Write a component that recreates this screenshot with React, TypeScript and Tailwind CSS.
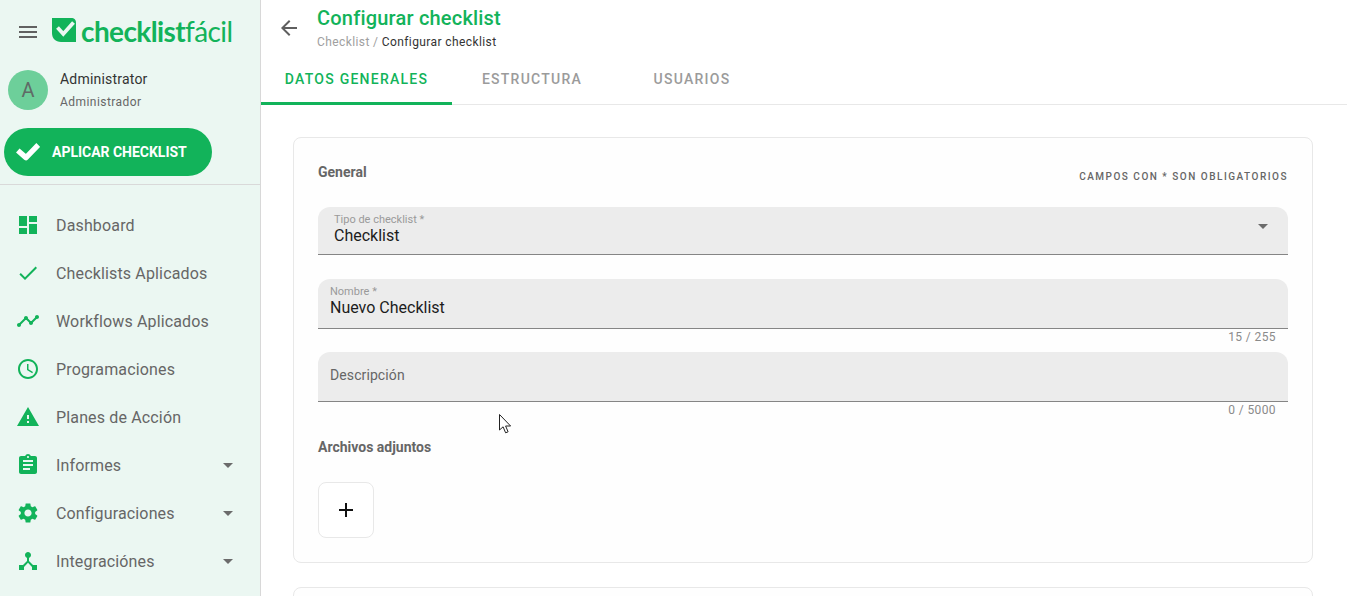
import React from "react";

const G = "#12b35a";
const paths: Record<string, string> = {
  dashboard: "M3 13h8V3H3v10zm0 8h8v-6H3v6zm10 0h8V11h-8v10zm0-18v6h8V3h-8z",
  check: "M9 16.17L4.83 12l-1.42 1.41L9 19 21 7l-1.41-1.41z",
  timeline: "M23 8c0 1.1-.9 2-2 2-.18 0-.35-.02-.51-.07l-3.56 3.55c.05.16.07.34.07.52 0 1.1-.9 2-2 2s-2-.9-2-2c0-.18.02-.36.07-.52l-2.55-2.55c-.16.05-.34.07-.52.07s-.36-.02-.52-.07l-4.55 4.56c.05.16.07.33.07.51 0 1.1-.9 2-2 2s-2-.9-2-2 .9-2 2-2c.18 0 .35.02.51.07l4.56-4.55C8.02 9.36 8 9.18 8 9c0-1.1.9-2 2-2s2 .9 2 2c0 .18-.02.36-.07.52l2.55 2.55c.16-.05.34-.07.52-.07s.36.02.52.07l3.55-3.56C19.02 8.35 19 8.18 19 8c0-1.1.9-2 2-2s2 .9 2 2z",
  schedule: "M11.99 2C6.47 2 2 6.48 2 12s4.47 10 9.99 10C17.52 22 22 17.52 22 12S17.52 2 11.99 2zM12 20c-4.42 0-8-3.58-8-8s3.58-8 8-8 8 3.58 8 8-3.58 8-8 8zm.5-13H11v6l5.25 3.15.75-1.23-4.5-2.67z",
  warning: "M1 21h22L12 2 1 21zm12-3h-2v-2h2v2zm0-4h-2v-4h2v4z",
  assignment: "M19 3h-4.18C14.4 1.84 13.3 1 12 1c-1.3 0-2.4.84-2.82 2H5c-1.1 0-2 .9-2 2v14c0 1.1.9 2 2 2h14c1.1 0 2-.9 2-2V5c0-1.1-.9-2-2-2zm-7 0c.55 0 1 .45 1 1s-.45 1-1 1-1-.45-1-1 .45-1 1-1zm2 14H7v-2h7v2zm3-4H7v-2h10v2zm0-4H7V7h10v2z",
  settings: "M19.14,12.94c0.04-0.3,0.06-0.61,0.06-0.94c0-0.32-0.02-0.64-0.07-0.94l2.03-1.58c0.18-0.14,0.23-0.41,0.12-0.61 l-1.92-3.32c-0.12-0.22-0.37-0.29-0.59-0.22l-2.39,0.96c-0.5-0.38-1.03-0.7-1.62-0.94L14.4,2.81c-0.04-0.24-0.24-0.41-0.48-0.41 h-3.84c-0.24,0-0.43,0.17-0.47,0.41L9.25,5.35C8.66,5.59,8.12,5.92,7.63,6.29L5.24,5.33c-0.22-0.08-0.47,0-0.59,0.22L2.74,8.87 C2.62,9.08,2.66,9.34,2.86,9.48l2.03,1.58C4.84,11.36,4.8,11.69,4.8,12s0.02,0.64,0.07,0.94l-2.03,1.58 c-0.18,0.14-0.23,0.41-0.12,0.61l1.92,3.32c0.12,0.22,0.37,0.29,0.59,0.22l2.39-0.96c0.5,0.38,1.03,0.7,1.62,0.94l0.36,2.54 c0.05,0.24,0.24,0.41,0.48,0.41h3.84c0.24,0,0.44-0.17,0.47-0.41l0.36-2.54c0.59-0.24,1.13-0.56,1.62-0.94l2.39,0.96 c0.22,0.08,0.47,0,0.59-0.22l1.92-3.32c0.12-0.22,0.07-0.47-0.12-0.61L19.14,12.94z M12,15.6c-1.98,0-3.6-1.62-3.6-3.6 s1.62-3.6,3.6-3.6s3.6,1.62,3.6,3.6S13.98,15.6,12,15.6z",
  hub: "M17 16l-4-4V8.82C14.16 8.4 15 7.3 15 6c0-1.66-1.34-3-3-3S9 4.34 9 6c0 1.3.84 2.4 2 2.82V12l-4 4H3v5h5v-3.05l4-4.2 4 4.2V21h5v-5h-4z",
};

function Icon({ d, size = 24, className = "" }: { d: string; size?: number; className?: string }) {
  return (
    <svg width={size} height={size} viewBox="0 0 24 24" fill="currentColor" className={className}>
      <path d={d} />
    </svg>
  );
}

const Caret = () => (
  <svg width="24" height="24" viewBox="0 0 24 24" fill="#6b6b6b"><path d="M7 10l5 5 5-5z" /></svg>
);

const items = [
  { t: "Dashboard", i: "dashboard" },
  { t: "Checklists Aplicados", i: "check" },
  { t: "Workflows Aplicados", i: "timeline" },
  { t: "Programaciones", i: "schedule" },
  { t: "Planes de Acción", i: "warning" },
  { t: "Informes", i: "assignment", c: true },
  { t: "Configuraciones", i: "settings", c: true },
  { t: "Integraciónes", i: "hub", c: true },
];

function Sidebar() {
  return (
    <aside className="w-[261px] h-[596px] shrink-0 bg-[#ebf7f2] border-r border-[#d8d8d8] overflow-hidden">
      <div className="h-[62px] pl-[16px] pt-[20px] flex items-start">
        <svg width="24" height="24" viewBox="0 0 24 24" fill="#616161"><path d="M3 18h18v-2H3v2zm0-5h18v-2H3v2zm0-7v2h18V6H3z" /></svg>
        <div className="flex items-start ml-[12px] -mt-[6px]">
          <svg width="26" height="26" viewBox="0 0 26 26" className="mt-[4px]">
            <path d="M0 0H19C22.5 0 24 1.5 24 5V24H9C3.5 24 0 20.5 0 15Z" fill={G} />
            <path d="M5.5 9.5l5.8 6.5L21.5 4.5" stroke="#ebf7f2" strokeWidth="3.8" fill="none" />
          </svg>
          <span className="ml-[3px] text-[28px] leading-[34px] tracking-[-0.6px] text-[#12b35a] font-['Lato',sans-serif]">
            <span className="font-bold">checklist</span><span className="font-normal">fácil</span>
          </span>
        </div>
      </div>
      <div className="flex items-start pl-[8px] h-[56px] pt-[8px]">
        <div className="w-[40px] h-[40px] rounded-full bg-[#6dcf9a] flex items-center justify-center text-[20px] text-[#5f6b66]">A</div>
        <div className="ml-[12px] -mt-[1px]">
          <div className="text-[14px] leading-[20px] text-[#333] tracking-[0.2px]">Administrator</div>
          <div className="text-[12px] leading-[16px] text-[#666] mt-[5px] tracking-[0.45px]">Administrador</div>
        </div>
      </div>
      <div className="pl-[4px] mt-[10px]">
        <button className="w-[208px] h-[48px] rounded-full bg-[#12b35a] text-white flex items-center pl-[12px]">
          <svg width="24" height="18" viewBox="0 0 24 18" fill="none" stroke="#fff" strokeWidth="5.4" strokeLinejoin="round"><path d="M1.8 7.5L10 14.6 22.3 2" /></svg>
          <span className="ml-[12px] text-[14px] font-bold tracking-[-0.02px]">APLICAR CHECKLIST</span>
        </button>
      </div>
      <div className="border-t border-[#d9d9d9] mt-[8px]" />
      <nav className="pt-[16px]">
        {items.map((it) => (
          <div key={it.t} className="h-[48px] flex items-center pl-[16px] pr-[20px]">
            <Icon d={paths[it.i]} className="text-[#12b35a]" />
            <span className="ml-[16px] pt-[2px] flex-1 text-[16px] text-[#666] tracking-[0.15px]">{it.t}</span>
            {it.c && <Caret />}
          </div>
        ))}
      </nav>
    </aside>
  );
}

function Field({ label, value, h, counter, big, select, px }: { label: string; value?: string; h: number; counter?: string; big?: boolean; select?: boolean; px: string }) {
  return (
    <div>
      <div
        className={`relative bg-[#ececec] rounded-t-[12px] border-b border-[#858585] ${px} ${h === 48 ? "h-[48px]" : "h-[50px]"}`}
      >
        {big ? (
          <div className="text-[14px] leading-[20px] pt-[13px] text-[#666] tracking-[0.1px]">{label}</div>
        ) : (
          <>
            <div className="text-[11px] leading-[12px] pt-[7px] text-[#9a9a9a]">{label}</div>
            <div className="text-[16px] leading-[20px] text-[#1c1c1c]">{value}</div>
          </>
        )}
        {select && <div className="absolute right-[13px] top-[7px]"><Caret /></div>}
      </div>
      {counter && <div className="text-right text-[12px] leading-[16px] pr-[12px] h-[23px] text-[#8a8a8a] tracking-[0.4px]">{counter}</div>}
    </div>
  );
}

function Main() {
  return (
    <main className="relative flex-1 h-[596px] overflow-hidden bg-white">
      <div className="h-[57px] flex items-start pl-[16px]">
        <svg width="24" height="24" viewBox="0 0 24 24" fill="#5f5f5f" className="mt-[16px]"><path d="M20 11H7.83l5.59-5.59L12 4l-8 8 8 8 1.41-1.41L7.83 13H20v-2z" /></svg>
        <div className="ml-[16px] pt-[6px]">
          <div className="text-[20px] leading-[24px] font-medium text-[#12b35a] tracking-[0.2px]">Configurar checklist</div>
          <div className="text-[12px] leading-[16px] mt-[4px] tracking-[0.4px]">
            <span className="text-[#a0a0a0]">Checklist / </span><span className="text-[#333]">Configurar checklist</span>
          </div>
        </div>
      </div>
      <div className="h-[48px] flex border-b border-[#e8e8e8]">
        <div className="w-[191px] h-[48px] border-b-[3px] border-[#12b35a] flex items-center justify-center text-[14px] font-medium tracking-[1.25px] text-[#12b35a]">DATOS GENERALES</div>
        <div className="w-[160px] pb-[2px] flex items-center justify-center text-[14px] font-medium tracking-[1.25px] text-[#9b9b9b]">ESTRUCTURA</div>
        <div className="w-[160px] pb-[2px] flex items-center justify-center text-[14px] font-medium tracking-[1.25px] text-[#9b9b9b]">USUARIOS</div>
      </div>
      <div className="px-[32px] pt-[32px] w-[1084px]">
        <section className="h-[426px] rounded-[8px] border border-[#e8e8e8] bg-[#fefefe] px-[24px] pt-[24px]">
          <div className="flex justify-between items-start h-[45px]">
            <div className="text-[14px] leading-[20px] font-bold text-[#666]">General</div>
            <div className="text-[10px] leading-[12px] font-medium tracking-[1.5px] text-[#666] mt-[9px]">CAMPOS CON * SON OBLIGATORIOS</div>
          </div>
          <Field label="Tipo de checklist *" value="Checklist" h={48} select px="pl-[16px]" />
          <div className="h-[24px]" />
          <Field label="Nombre *" value="Nuevo Checklist" h={50} counter="15 / 255" px="pl-[12px]" />
          <Field label="Descripción" h={50} big counter="0 / 5000" px="pl-[12px]" />
          <div className="text-[14px] leading-[20px] font-bold text-[#666] mt-[12px]">Archivos adjuntos</div>
          <button className="mt-[25px] w-[56px] h-[56px] rounded-[8px] border border-[#e8e8e8] bg-white flex items-center justify-center text-[#111]">
            <svg width="24" height="24" viewBox="0 0 24 24" fill="currentColor"><path d="M19 13h-6v6h-2v-6H5v-2h6V5h2v6h6v2z" /></svg>
          </button>
        </section>
        <section className="h-[100px] mt-[24px] rounded-[8px] border border-[#e8e8e8] bg-[#fefefe]" />
      </div>
      <svg className="absolute left-[237px] top-[413px]" width="15" height="22" viewBox="0 0 15 22">
        <path d="M1.5 1.5V17l3.6-3.2 2.5 6 2.5-1-2.5-5.8h5z" fill="#fff" stroke="#222" strokeWidth="1" />
      </svg>
    </main>
  );
}

export default function App() {
  return (
    <div className="flex w-[1347px] h-[596px] overflow-hidden font-['Roboto',sans-serif] bg-white">
      <Sidebar />
      <Main />
    </div>
  );
}
